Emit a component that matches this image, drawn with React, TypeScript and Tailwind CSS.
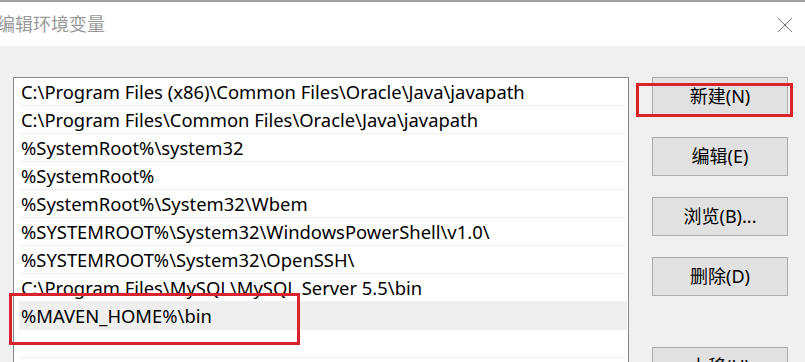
const paths = [
  "C:\\Program Files (x86)\\Common Files\\Oracle\\Java\\javapath",
  "C:\\Program Files\\Common Files\\Oracle\\Java\\javapath",
  "%SystemRoot%\\system32",
  "%SystemRoot%",
  "%SystemRoot%\\System32\\Wbem",
  "%SYSTEMROOT%\\System32\\WindowsPowerShell\\v1.0\\",
  "%SYSTEMROOT%\\System32\\OpenSSH\\",
  "C:\\Program Files\\MySQL\\MySQL Server 5.5\\bin",
  "%MAVEN_HOME%\\bin",
  "",
];

const buttons = ["新建(N)", "编辑(E)", "浏览(B)...", "删除(D)"];

const font = { fontFamily: '"Noto Sans", "Noto Sans CJK SC", sans-serif' };

const App: React.FC = () => {
  return (
    <div className="relative w-[805px] h-[362px] overflow-hidden bg-[#f0f0f0]" style={font}>
      <div className="h-[2px] bg-[#a0a0a0]"></div>
      {/* title bar */}
      <div className="h-[44px] bg-white flex items-center justify-between">
        <span className="-ml-[3px] text-[18px] text-[#999999] leading-none">编辑环境变量</span>
        <svg width="16" height="16" viewBox="0 0 16 16" className="mr-[12px] mt-[2px]">
          <path d="M1 1 L15 15 M15 1 L1 15" stroke="#777" strokeWidth="1" fill="none" />
        </svg>
      </div>

      <div className="flex pt-[31px]">
        {/* path list */}
        <div className="ml-[13px] w-[616px] h-[300px] bg-white border border-[#828790] pl-[5px] pr-[1px]">
          {paths.map((p, i) => (
            <div
              key={i}
              className={
                "h-[28px] border-b border-[#f0f0f0] pl-[2px] flex items-center text-[18.4px] text-black whitespace-nowrap " +
                (i === 8 ? "bg-[#efefef]" : "")
              }
            >
              {p}
            </div>
          ))}
        </div>

        {/* buttons */}
        <div className="ml-[23px] w-[136px] flex flex-col">
          {buttons.map((b, i) => (
            <button
              key={b}
              className={
                "h-[39px] bg-[#e1e1e1] border border-[#adadad] text-[18px] text-black " +
                (i === 0 ? "" : "mt-[21px]")
              }
            >
              {b}
            </button>
          ))}
          <button className="h-[39px] mt-[51px] bg-[#e1e1e1] border border-[#adadad] text-[18px] text-black">
            上移(U)
          </button>
        </div>
      </div>

      {/* red annotation boxes */}
      <div className="absolute left-[636px] top-[83px] w-[157px] h-[34px] border-[3px] border-[#d9232d]"></div>
      <div className="absolute left-[9px] top-[293px] w-[291px] h-[52px] border-[3px] border-[#d9232d]"></div>
    </div>
  );
};

export default App;
